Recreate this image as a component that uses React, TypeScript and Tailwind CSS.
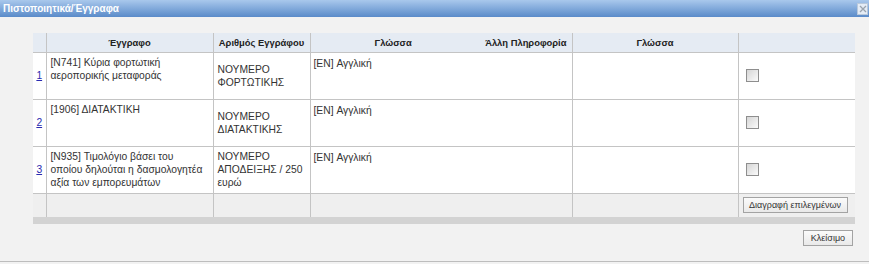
import React from 'react';

type Row = {
  num: string;
  doc: string[];
  ref: string;
  lang: string;
};

const rows: Row[] = [
  { num: '1', doc: ['[N741] Κύρια φορτωτική', 'αεροπορικής μεταφοράς'], ref: 'ΝΟΥΜΕΡΟ ΦΟΡΤΩΤΙΚΗΣ', lang: '[EN] Αγγλική' },
  { num: '2', doc: ['[1906] ΔΙΑΤΑΚΤΙΚΗ'], ref: 'ΝΟΥΜΕΡΟ ΔΙΑΤΑΚΤΙΚΗΣ', lang: '[EN] Αγγλική' },
  { num: '3', doc: ['[N935] Τιμολόγιο βάσει του', 'οποίου δηλούται η δασμολογητέα', 'αξία των εμπορευμάτων'], ref: 'ΝΟΥΜΕΡΟ ΑΠΟΔΕΙΞΗΣ / 250 ευρώ', lang: '[EN] Αγγλική' },
];

const Checkbox = () => (
  <span className="block w-[13px] h-[13px] border border-[#8e8e8e] bg-gradient-to-br from-[#d6d6d6] to-[#fbfbfb]" />
);

export default function App() {
  return (
    <div className="w-[869px] h-[264px] bg-[#f2f2f2] flex flex-col font-['Liberation_Sans',Arial,sans-serif] text-[10.3px] text-[#333] leading-[13px] overflow-hidden">
      <div className="h-[17px] shrink-0 flex items-center justify-between pl-[3px] pr-[1px] bg-gradient-to-b from-[#a9c8ec] to-[#5a8bc9]">
        <span className="text-white font-bold text-[10px]">Πιστοποιητικά/Έγγραφα</span>
        <span className="w-[11px] h-[12px] flex items-center justify-center bg-[#e4ecf6] border border-[#b9c9dc]">
          <svg width="8" height="8" viewBox="0 0 8 8">
            <path d="M1 1 L7 7 M7 1 L1 7" stroke="#9aa3ad" strokeWidth="1.3" />
          </svg>
        </span>
      </div>

      <div className="flex-1 flex flex-col pt-[16px] pl-[33px] pr-[14px] border-b border-[#bdbdbd]">
        <table className="table-fixed border-collapse w-[822px]">
          <colgroup>
            <col className="w-[13px]" />
            <col className="w-[167px]" />
            <col className="w-[97px]" />
            <col className="w-[262px]" />
            <col className="w-[166px]" />
            <col className="w-[117px]" />
          </colgroup>
          <thead>
            <tr className="h-[19px] bg-[#e5ebf3] text-[9.4px] text-[#222]">
              <th className="border-r border-[#c4c4c4] border-b border-b-[#c4c4c4]"></th>
              <th className="border-r border-[#c4c4c4] border-b border-b-[#c4c4c4] font-bold text-center">Έγγραφο</th>
              <th className="border-r border-[#c4c4c4] border-b border-b-[#c4c4c4] font-bold text-center whitespace-nowrap">Αριθμός Εγγράφου</th>
              <th className="border-r border-[#c4c4c4] border-b border-b-[#c4c4c4] font-bold">
                <div className="flex items-center pr-[5px]">
                  <span className="ml-[64px]">Γλώσσα</span>
                  <span className="ml-auto">Άλλη Πληροφορία</span>
                </div>
              </th>
              <th className="border-r border-[#c4c4c4] border-b border-b-[#c4c4c4] font-bold text-center">Γλώσσα</th>
              <th className="border-b border-[#c4c4c4]"></th>
            </tr>
          </thead>
          <tbody>
            {rows.map(r => (
              <tr key={r.num} className="h-[47px] bg-white border-b border-[#c4c4c4]">
                <td className="border-r border-[#c4c4c4] align-middle text-center">
                  <a href="#" className="text-[#2a2ab0] underline">{r.num}</a>
                </td>
                <td className="border-r border-[#c4c4c4] align-top pt-[3px] pl-[4px] pr-[2px]">
                  {r.doc.map(line => (
                    <span key={line} className="block whitespace-nowrap">{line}</span>
                  ))}
                </td>
                <td className="border-r border-[#c4c4c4] align-middle pl-[4px] pr-[2px]">{r.ref}</td>
                <td className="border-r border-[#c4c4c4] align-top pt-[4px] pl-[3px]">{r.lang}</td>
                <td className="border-r border-[#c4c4c4]"></td>
                <td className="align-middle pl-[7px]">
                  <Checkbox />
                </td>
              </tr>
            ))}
            <tr className="h-[24px] bg-[#efefef]">
              <td className="border-r border-[#c4c4c4]"></td>
              <td className="border-r border-[#c4c4c4]"></td>
              <td className="border-r border-[#c4c4c4]"></td>
              <td className="border-r border-[#c4c4c4]"></td>
              <td className="border-r border-[#c4c4c4]"></td>
              <td className="align-middle pl-[4px]">
                <button className="h-[16px] w-[105px] border border-[#a3a3a3] bg-gradient-to-b from-[#fbfbfb] to-[#e9e9e9] text-[9px] leading-[14px] text-[#333] whitespace-nowrap">
                  Διαγραφή επιλεγμένων
                </button>
              </td>
            </tr>
          </tbody>
        </table>
        <div className="w-[822px] h-[7px] bg-[#d3d3d3]" />
        <div className="w-[822px] flex justify-end pt-[6px] pr-[2px]">
          <button className="h-[16px] w-[50px] border border-[#a3a3a3] bg-gradient-to-b from-[#fbfbfb] to-[#e9e9e9] text-[9px] leading-[14px] text-[#333]">
            Κλείσιμο
          </button>
        </div>
      </div>
      <div className="h-[2px] shrink-0" />
    </div>
  );
}
